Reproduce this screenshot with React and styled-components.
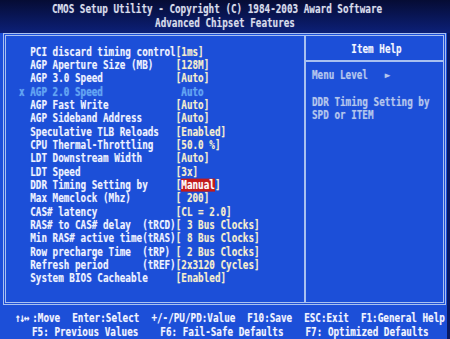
import React from 'react';
import styled, { createGlobalStyle, css } from 'styled-components';

const Global = createGlobalStyle`
  html, body { margin: 0; padding: 0; background: #0a1a60; }
  body {
    width: 450px; height: 339px; overflow: hidden;
    font-family: "DejaVu Sans Mono", "Liberation Mono", monospace;
    font-weight: bold; font-size: 9.3px; line-height: 13.35px;
  }
`;

const tall = css`
  transform: scaleY(1.3);
  text-shadow: 0 0 1px rgba(220, 230, 255, 0.35);
`;

const Screen = styled.div`
  width: 450px; height: 339px;
  display: flex; flex-direction: column;
  background: #0a1a60;
`;

const Header = styled.header`
  height: 33px; box-sizing: border-box; padding-top: 2.3px;
  display: flex; flex-direction: column; align-items: center;
  background: linear-gradient(#060c34, #0c2078);
  color: #d8dcea;
`;

const TitleLine = styled.div`
  ${tall};
  white-space: pre;
  margin-right: ${p => p.$shift || 0}px;
`;

const Body = styled.div`
  width: 447px; flex: 1;
  display: flex; flex-direction: column;
  background: #1c4fd8;
`;

const Panel = styled.main`
  margin-left: 3px; width: 443px; height: 272px; box-sizing: border-box;
  border: 3px double #a8c0f0;
  display: flex;
`;

const Settings = styled.section`
  width: 300px; box-sizing: border-box;
  padding: 8.5px 0 0 13px;
  border-right: 2px solid #a8c0f0;
`;

const Row = styled.div`
  ${tall};
  display: flex; white-space: pre;
  color: ${p => (p.$disabled ? '#5fa6f4' : '#eef2ff')};
`;

const Marker = styled.span`
  width: 2ch; flex: none;
`;

const Label = styled.span`
  width: 26ch; flex: none; display: flex;
`;

const Name = styled.span`
  min-width: 20ch;
`;

const Value = styled.span`
  color: ${p => (p.$disabled ? '#5fa6f4' : '#f6eecb')};
`;

const Highlight = styled.span`
  display: inline-block; height: 9.5px; line-height: 9.5px;
  background: #c41a1a; color: #ffffff;
`;

const Help = styled.aside`
  flex: 1; display: flex; flex-direction: column;
`;

const HelpHead = styled.div`
  height: 26px; box-sizing: border-box;
  border-bottom: 2px solid #a8c0f0;
  display: flex; align-items: center; justify-content: center;
  padding: 1px 0 0 4px;
  color: #f4f6ff;
`;

const HelpBody = styled.div`
  padding: 6px 0 0 6px;
  color: #b4c6ec;
`;

const HelpLine = styled.div`
  ${tall};
  white-space: pre; min-height: 13.35px;
`;

const Footer = styled.footer`
  flex: 1; box-sizing: border-box; padding-top: 6.3px;
  display: flex; flex-direction: column;
  color: #f2f4ff;
`;

const KeyLine = styled.div`
  ${tall};
  display: flex; white-space: pre;
  padding-left: ${p => p.$indent}px;
  gap: ${p => p.$gap}px;
`;

const Arrows = styled.span`
  letter-spacing: -1.2px;
  margin-right: 4px;
`;

const rows = [
  { l: 'PCI discard timing control', v: '[1ms]' },
  { l: 'AGP Aperture Size (MB)', v: '[128M]' },
  { l: 'AGP 3.0 Speed', v: '[Auto]' },
  { l: 'AGP 2.0 Speed', v: ' Auto', disabled: true },
  { l: 'AGP Fast Write', v: '[Auto]' },
  { l: 'AGP Sideband Address', v: '[Auto]' },
  { l: 'Speculative TLB Reloads', v: '[Enabled]' },
  { l: 'CPU Thermal-Throttling', v: '[50.0 %]' },
  { l: 'LDT Downstream Width', v: '[Auto]' },
  { l: 'LDT Speed', v: '[3x]' },
  { l: 'DDR Timing Setting by', v: 'Manual', selected: true },
  { l: 'Max Memclock (Mhz)', v: '[ 200]' },
  { l: 'CAS# latency', v: '[CL = 2.0]' },
  { l: 'RAS# to CAS# delay', t: '(tRCD)', v: '[ 3 Bus Clocks]' },
  { l: 'Min RAS# active time', t: '(tRAS)', v: '[ 8 Bus Clocks]' },
  { l: 'Row precharge Time', t: '(tRP)', v: '[ 2 Bus Clocks]' },
  { l: 'Refresh period', t: '(tREF)', v: '[2x3120 Cycles]' },
  { l: 'System BIOS Cacheable', v: '[Enabled]' },
];

export default function App() {
  return (
    <Screen>
      <Global />
      <Header>
        <TitleLine $shift={16}>CMOS Setup Utility - Copyright (C) 1984-2003 Award Software</TitleLine>
        <TitleLine>Advanced Chipset Features</TitleLine>
      </Header>
      <Body>
        <Panel>
          <Settings>
            {rows.map(r => (
              <Row key={r.l} $disabled={r.disabled}>
                <Marker>{r.disabled ? 'x' : ''}</Marker>
                <Label>
                  <Name>{r.l}</Name>
                  {r.t && <span>{r.t}</span>}
                </Label>
                {r.selected ? (
                  <Value>[<Highlight>{r.v}</Highlight>]</Value>
                ) : (
                  <Value $disabled={r.disabled}>{r.v}</Value>
                )}
              </Row>
            ))}
          </Settings>
          <Help>
            <HelpHead>
              <HelpLine>Item Help</HelpLine>
            </HelpHead>
            <HelpBody>
              <HelpLine>Menu Level   ►</HelpLine>
              <HelpLine> </HelpLine>
              <HelpLine>DDR Timing Setting by</HelpLine>
              <HelpLine>SPD or ITEM</HelpLine>
            </HelpBody>
          </Help>
        </Panel>
        <Footer>
          <KeyLine $indent={15} $gap={12}>
            <span><Arrows>↑↓↔</Arrows>:Move</span>
            <span>Enter:Select</span>
            <span>+/-/PU/PD:Value</span>
            <span>F10:Save</span>
            <span>ESC:Exit</span>
            <span>F1:General Help</span>
          </KeyLine>
          <KeyLine $indent={32} $gap={22}>
            <span>F5: Previous Values</span>
            <span>F6: Fail-Safe Defaults</span>
            <span>F7: Optimized Defaults</span>
          </KeyLine>
        </Footer>
      </Body>
    </Screen>
  );
}
